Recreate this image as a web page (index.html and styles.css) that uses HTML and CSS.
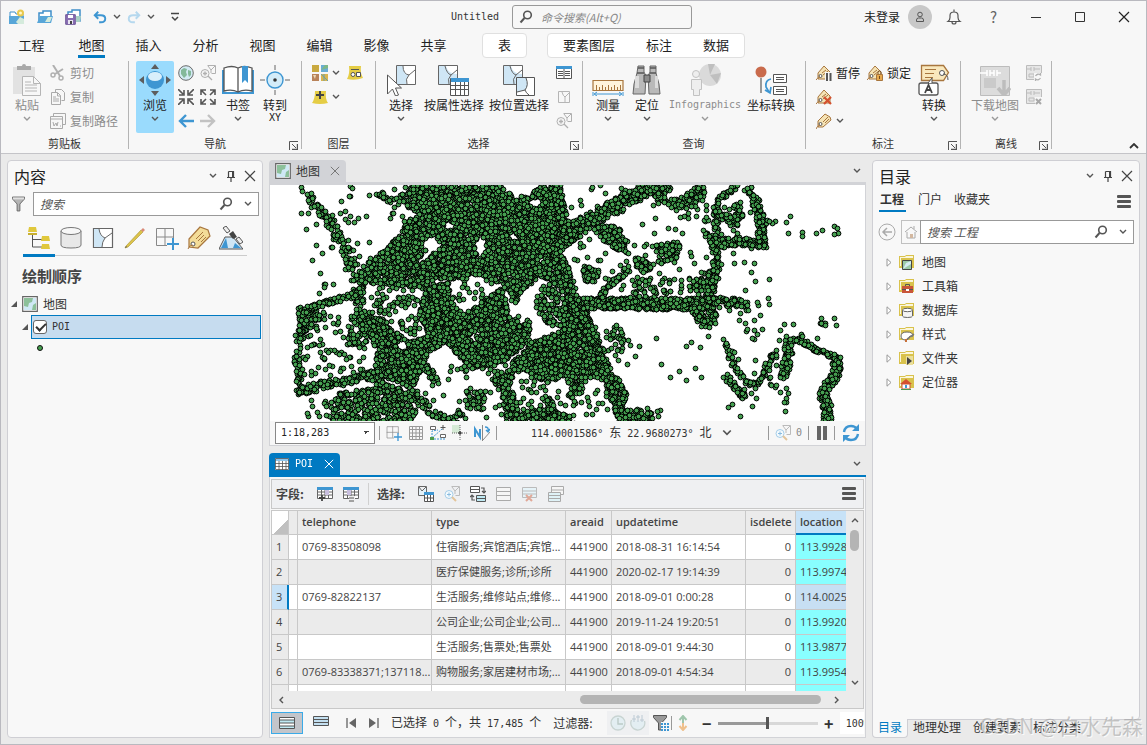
FILE: index.html
```html
<!DOCTYPE html>
<html lang="zh-CN">
<head>
  <meta charset="UTF-8">
  <meta name="viewport" content="width=device-width, initial-scale=1.0">
  <title>Untitled</title>
  <link rel="stylesheet" href="styles.css">
</head>
<body>

  <!-- Icon sprite -->
  <svg class="sprite" aria-hidden="true">
    <symbol id="chev" viewBox="0 0 8 6"><path d="M1 1l3 3 3-3" fill="none" stroke="currentColor" stroke-width="1.4"/></symbol>
    <symbol id="new" viewBox="0 0 16 16"><path d="M1 3h5l1 2h7v9H1z" fill="#fff" stroke="#3f8fc9"/><path d="M0 7h15v8H0z" fill="#58a6d8"/><path d="M7 13l4-5 4 2v5H9z" fill="#d5ebdc"/><circle cx="11.500" cy="4" r="3.500" fill="#e8c84c"/><circle cx="11.500" cy="4" r="1.500" fill="#fff6c8"/></symbol>
    <symbol id="open" viewBox="0 0 16 16"><path d="M2 13V4h4V2h8v7" fill="#fff" stroke="#3f8fc9" stroke-width="1.500"/><path d="M0 14l3-7h13l-2 7z" fill="#58a6d8"/><path d="M8 13l3-5 4 0-2 5z" fill="#d5ebdc"/></symbol>
    <symbol id="save" viewBox="0 0 16 16"><path d="M3 6V3h4V1h8v11h-4" fill="#fff" stroke="#3f8fc9" stroke-width="1.500"/><path d="M11 7h5l-1 6h-4z" fill="#a9d0c4"/><path d="M.7 5.700h9.600v9.600H.7z" fill="#8a6fb3" stroke="#6f5799"/><path d="M3 6h5v3H3z" fill="#fff"/><path d="M3 11h5v4H3z" fill="#e8e4f0"/><path d="M5 12h2v3H5z" fill="#444"/></symbol>
    <symbol id="undo" viewBox="0 0 16 16"><path d="M6 2L2 6l4 4M2 6h7q5 0 5 4t-5 4H7" fill="none" stroke="currentColor" stroke-width="2.200"/></symbol>
    <symbol id="redo" viewBox="0 0 16 16"><path d="M10 2l4 4-4 4M14 6H7Q2 6 2 10t5 4h2" fill="none" stroke="currentColor" stroke-width="2.200"/></symbol>
    <symbol id="custom" viewBox="0 0 10 10"><path d="M1 1.500h8M2 5l3 3 3-3" fill="none" stroke="#444" stroke-width="1.500"/></symbol>
    <symbol id="lens" viewBox="0 0 14 14"><circle cx="8.500" cy="5" r="3.800" fill="none" stroke="#555" stroke-width="1.600"/><path d="M5.500 8L1.500 12.500" stroke="#555" stroke-width="2"/></symbol>
    <symbol id="user" viewBox="0 0 12 14"><circle cx="6" cy="4.500" r="2.300" fill="none" stroke="#555"/><path d="M2.500 11.500V10q0-2 2-2h3q2 0 2 2v1.500z" fill="none" stroke="#555"/></symbol>
    <symbol id="bell" viewBox="0 0 14 16"><path d="M1 12.500h12q-2-1.500-2-4V6.500Q11 3 7 3T3 6.500v2q0 2.500-2 4zM7 3V.5M5 13q0 2 2 2t2-2" fill="none" stroke="#555" stroke-width="1.200"/></symbol>
    <symbol id="min" viewBox="0 0 12 12"><path d="M1 6.500h10" stroke="#333"/></symbol>
    <symbol id="max" viewBox="0 0 12 12"><path d="M1.500 1.500h9v9h-9z" fill="none" stroke="#333"/></symbol>
    <symbol id="close" viewBox="0 0 12 12"><path d="M1 1l10 10M11 1L1 11" stroke="currentColor" stroke-width="1.200"/></symbol>
    <symbol id="pin" viewBox="0 0 10 12"><path d="M2.500 1.500h5v5.500M2.500 1.500V7M1 7.500h8M5 8v4" fill="none" stroke="#444" stroke-width="1.200"/><path d="M6 1h2v6H6z" fill="#444"/></symbol>
    <symbol id="launch" viewBox="0 0 9 9"><path d="M.5 9V.5H9M3 3l4 4" fill="none" stroke="#555"/><path d="M8.500 3v5.500H3" fill="none" stroke="#555" stroke-width="1.400"/></symbol>

    <symbol id="paste" viewBox="0 0 32 32"><path d="M2 3h22v27H2z" fill="#e2e2e2"/><path d="M6 2h14v4H6z" fill="#a9a9a9"/><circle cx="13" cy="2" r="2" fill="#a9a9a9"/><path d="M11.500 12.500h11l7 7v12h-18z" fill="#f7f7f7" stroke="#b5b5b5"/><path d="M22.500 12.500v7h7M14 18h6M14 21h12M14 24h12M14 27h12" fill="none" stroke="#b5b5b5"/></symbol>
    <symbol id="cut" viewBox="0 0 16 16"><path d="M3 0l7 11M13 4L5 9" stroke="#b0b0b0" stroke-width="2"/><circle cx="3" cy="10" r="2" fill="none" stroke="#b0b0b0" stroke-width="1.500"/><circle cx="11" cy="13" r="2" fill="none" stroke="#b0b0b0" stroke-width="1.500"/></symbol>
    <symbol id="copy" viewBox="0 0 16 16"><path d="M5.500 3.500V.5h6l3 3v8h-3M1.500 3.500h6l3 3v9h-9z" fill="#f7f7f7" stroke="#aaa"/><path d="M7.500 4v3h3M3 8h3M3 10h6M3 12h6" fill="none" stroke="#aaa"/></symbol>
    <symbol id="copypath" viewBox="0 0 16 16"><path d="M3.500 3V.5h12v11H13M.5 3.500h12v12H.5z" fill="#f7f7f7" stroke="#aaa"/><path d="M1 6h11M3 9l1 4 2-3 1 3 1-4M10 13h1" fill="none" stroke="#aaa"/></symbol>
    <symbol id="explore" viewBox="0 0 32 32"><path d="M16 0l4 5h-8zM16 32l4-5h-8zM0 16l5-4v8zM32 16l-5-4v8z" fill="#5d5d5d"/><circle cx="16" cy="16" r="9" fill="#3e96d2"/><ellipse cx="16" cy="12.500" rx="7" ry="4.500" fill="#d9effb"/></symbol>
    <symbol id="globe" viewBox="0 0 16 16"><circle cx="8" cy="8" r="7.300" fill="#d3ebf4" stroke="#6b6b6b"/><path d="M3 5l3-2 3 1-1 3 1 3-3 3-3-4zM10 5l3 1 0 4-2 2-1-3z" fill="#83b99a"/></symbol>
    <symbol id="zoomsel" viewBox="0 0 16 16"><path d="M7.500 .5h8v8h-4M8 1l3 4 4-4M11 5v3" fill="none" stroke="#b0b0b0"/><circle cx="5" cy="8.500" r="4" fill="#f4f4f4" stroke="#b0b0b0"/><path d="M3 8.500h4M5 6.500v4M8 11l4 4" stroke="#b0b0b0" stroke-width="1.300"/></symbol>
    <symbol id="zoomin" viewBox="0 0 16 16"><path d="M0 0l5 5M6 1v5H1M16 0l-5 5M10 1v5h5M0 16l5-5M6 15v-5H1M16 16l-5-5M10 15v-5h5" fill="none" stroke="#555" stroke-width="1.600"/></symbol>
    <symbol id="zoomout" viewBox="0 0 16 16"><path d="M1 6V1h5M1 1l5 5M10 1h5v5M15 1l-5 5M1 10v5h5M1 15l5-5M10 15h5v-5M15 15l-5-5" fill="none" stroke="#555" stroke-width="1.600"/></symbol>
    <symbol id="back" viewBox="0 0 16 16"><path d="M8 2L2 8l6 6M2 8h14" fill="none" stroke="#3e96d2" stroke-width="2.400"/></symbol>
    <symbol id="fwd" viewBox="0 0 16 16"><path d="M8 2l6 6-6 6M14 8H0" fill="none" stroke="#c2c2c2" stroke-width="2.400"/></symbol>
    <symbol id="book" viewBox="0 0 32 32"><path d="M1 6v23h30V6" fill="#fff" stroke="#3e96d2" stroke-width="2"/><path d="M2 4q8-3 14 0 6-3 14 0v23q-8-2-14 1-6-3-14-1zM16 4v24" fill="#fff" stroke="#555" stroke-width="1.300"/><path d="M20 2h6v17l-3-3-3 3z" fill="#3e96d2"/></symbol>
    <symbol id="goxy" viewBox="0 0 32 32"><circle cx="16" cy="16" r="8" fill="#d3ecf9" stroke="#3e96d2" stroke-width="1.400"/><circle cx="16" cy="16" r="1.800" fill="#333"/><path d="M16 1v5M16 26v5M1 16h5M26 16h5" stroke="#666"/></symbol>
    <symbol id="basemap" viewBox="0 0 16 16"><path d="M0 0h7v7H0z" fill="#c9a93f"/><path d="M9 0h7v7H9z" fill="#6aaed6"/><path d="M9 5l4-5h3v3z" fill="#7eb887"/><path d="M0 9h7v7H0z" fill="#b9835a"/><path d="M1 10l3 0-1 4z" fill="#ecd9b5"/><path d="M9 9h7v7H9z" fill="#d8b552"/><path d="M9 9l7 7M12 9v7" stroke="#6aa0a8"/></symbol>
    <symbol id="adddata" viewBox="0 0 16 16"><path d="M3 2h11q-1 8 2 12-8 2-16 0Q3 10 3 2z" fill="#e5cd45"/><path d="M8 2v8M4 6h8" stroke="#444" stroke-width="2"/></symbol>
    <symbol id="addgfx" viewBox="0 0 16 16"><path d="M2 1h12q-1 7 2 12-8 3-16 1Q3 9 2 1z" fill="#e5cd45"/><circle cx="6" cy="9.500" r="2" fill="#fff" stroke="#555"/><path d="M9.500 7.500h4v4h-4zM4 4.500h8" fill="#fff" stroke="#555"/></symbol>
    <symbol id="select" viewBox="0 0 32 32"><path d="M11.500 1.500h19v19h-19z" fill="#fff" stroke="#666"/><path d="M12 2h6q0 8 6 9-4 4-2 9H12z" fill="#cfe6f5"/><path d="M18 2q0 8 6 9l6-5M24 11q-4 4-2 9" fill="none" stroke="#666"/><path d="M2.500 11v19l5-5 3 7 3-1-3-7h6z" fill="#fff" stroke="#555"/></symbol>
    <symbol id="selattr" viewBox="0 0 32 32"><path d="M.5 1.500h19v19H.5z" fill="#cfe6f5" stroke="#666"/><path d="M8 2h11v8q-9 0-11-8z" fill="#fff"/><path d="M7 2q2 8 6 9l6-5M13 11q-4 4-2 9" fill="none" stroke="#666"/><path d="M12.500 14.500h18v17h-18z" fill="#fff" stroke="#555"/><path d="M13 14h18v4H13z" fill="#3e96d2"/><path d="M13 21.500h18M13 25.500h18M17.500 18v13M22.500 18v13M26.500 18v13" stroke="#555"/></symbol>
    <symbol id="selloc" viewBox="0 0 32 32"><path d="M.5 1.500h19v19H.5z" fill="#cfe6f5" stroke="#666"/><path d="M8 2h11v8q-9 0-11-8z" fill="#fff"/><path d="M7 2q2 8 6 9l6-5M13 11q-4 4-2 9" fill="none" stroke="#666"/><path d="M13.500 13.500h18v18h-18z" fill="#fff" stroke="#555"/><path d="M14 14h9q3 7-1 12l-8 2z" fill="#cfe6f5"/><path d="M23 14q3 7-1 12l-8 2M22 26q1 3 4 5" fill="none" stroke="#555"/></symbol>
    <symbol id="attrtab" viewBox="0 0 16 14"><path d="M.5 .5h15v12H.5z" fill="#fff" stroke="#555"/><path d="M0 0h16v3H0z" fill="#3e96d2"/><path d="M2 5.500h5M2 7.500h5M2 9.500h5M9 5.500h5M9 7.500h5M9 9.500h5M8 3v10" stroke="#555"/></symbol>
    <symbol id="clearsel" viewBox="0 0 16 16"><path d="M2.500 2.500h11v11h-11zM6 3q1 4 3 5l4-4M9 8v5" fill="none" stroke="#b5b5b5"/></symbol>
    <symbol id="measure" viewBox="0 0 32 32"><path d="M1 16.500h30v10H1z" fill="#fff4dc" stroke="#a8763e" stroke-width="1.200"/><path d="M4.500 26v-5M7.500 26v-3M10.500 26v-5M13.500 26v-3M16.500 26v-5M19.500 26v-3M22.500 26v-5M25.500 26v-3M28.500 26v-5" stroke="#a8763e"/><path d="M1 28v4M31 28v4M3 30h26M5 28l-3 2 3 2M27 28l3 2-3 2" stroke="#3e96d2" fill="none"/></symbol>
    <symbol id="locate" viewBox="0 0 32 32"><path d="M7 2h6v6l2 4-1 18H2l1-10L6 9z" fill="#b9b9b9" stroke="#666"/><path d="M19 2h6v7l3 11 1 10H18l-1-18 2-4z" fill="#b9b9b9" stroke="#666"/><path d="M7 4h6M19 4h6M6 9h7M19 9h6" stroke="#555" stroke-width="1.600"/><path d="M4 12h4v12H4zM24 12h3v12h-3z" fill="#dcdcdc"/><path d="M13 11h6v7h-6z" fill="#8c8c8c" stroke="#444"/></symbol>
    <symbol id="info" viewBox="0 0 32 32"><circle cx="21" cy="11" r="11" fill="#dadada"/><path d="M21 11L19 0h7zM21 11l11-2-4 11z" fill="#bfbfbf"/><circle cx="7" cy="10" r="3.500" fill="#eee" stroke="#c2c2c2"/><path d="M2.500 15.500h10v10h-2v6h-6v-6h-2z" fill="#eee" stroke="#c2c2c2"/></symbol>
    <symbol id="coord" viewBox="0 0 32 32"><circle cx="6" cy="8" r="5.500" fill="#c96b4c"/><path d="M6 14v15" stroke="#666" stroke-width="1.300"/><path d="M16 15q-6 1-5 8l3 5M10 26l5 3 1-6" fill="none" stroke="#3e96d2" stroke-width="1.700"/><path d="M18.500 10.500h13v8h-13zM18.500 22.500h13v8h-13z" fill="#fff" stroke="#555"/><path d="M21 13.500h8M21 15.500h8M21 25.500h8M21 27.500h8" stroke="#555"/></symbol>
    <symbol id="tag" viewBox="0 0 16 16"><path d="M2 8L9 1l5 3 1 3-8 7-5 0z" fill="#f5e3b5" stroke="#a8763e"/><circle cx="4.500" cy="11" r="1.500" fill="#fff" stroke="#555"/><path d="M4 12q-3 1-4 4M7 9l5-5M9 10l4-4" fill="none" stroke="#a8763e"/></symbol>
    <symbol id="house" viewBox="0 0 16 16"><path d="M2 8l6-7 6 6v7H2z" fill="#f5e3b5" stroke="#a8763e"/><circle cx="4.500" cy="11" r="1.500" fill="#fff" stroke="#555"/><path d="M4 12q-3 1-4 3M6 8l4-3M7 10l5-4" fill="none" stroke="#a8763e"/></symbol>
    <symbol id="tagpause" viewBox="0 0 16 16"><use href="#house"/><path d="M9 7h7v9H9z" fill="#f7f7f7"/><path d="M11 8v8M14.500 8v8" stroke="#555" stroke-width="2"/></symbol>
    <symbol id="taglock" viewBox="0 0 16 16"><use href="#house"/><path d="M9.500 9.500h6v6h-6z" fill="#e8a94c" stroke="#a8763e"/><path d="M11 9V7.500q0-1.500 1.500-1.500T14 7.500V9M12.500 11v3" fill="none" stroke="#704a20"/></symbol>
    <symbol id="tagx" viewBox="0 0 16 16"><use href="#house"/><path d="M8 8l7 7M15 8l-7 7" stroke="#d4502e" stroke-width="2.200"/></symbol>
    <symbol id="convert" viewBox="0 0 32 32"><path d="M3.500 1.500h22l5 7-5 8h-22z" fill="#f9e8bd" stroke="#a8763e" stroke-width="1.300"/><path d="M7 5.500h11M7 9.500h9M7 13.500h8" stroke="#a8763e"/><circle cx="24" cy="9" r="2.500" fill="#fff" stroke="#555"/><path d="M25 10q5 0 5 6" fill="none" stroke="#555"/><rect x="1" y="19" width="19" height="12" rx="2" fill="#fff" stroke="#555" stroke-width="1.300"/><path d="M10 19l4-5v5" fill="#fff" stroke="#555"/><path d="M7 29l3.500-8 3.500 8M8.500 26h4" fill="none" stroke="#444" stroke-width="1.800"/></symbol>
    <symbol id="download" viewBox="0 0 32 32"><path d="M1.500 2.500h29v29h-29z" fill="#dcdcdc" stroke="#bcbcbc"/><path d="M1 9h7M8 6v6M11 6v6M11 9h4M15 6v6M18 6v6M18 9h4" stroke="#fff" stroke-width="1.500"/><path d="M5 14h12v10H5z" fill="#cacaca"/><path d="M25 16v13M19 24l6 7 6-7" fill="none" stroke="#bdbdbd" stroke-width="3.500"/></symbol>
    <symbol id="sync" viewBox="0 0 16 16"><path d="M.5 .5h15v14H.5z" fill="#e6e6e6" stroke="#bcbcbc"/><path d="M1 4h4M5 2v4M8 2v4M8 4h6M3 9h5v3H3z" stroke="#bcbcbc" fill="none"/><path d="M8 8h8v8H8z" fill="#f7f7f7"/><path d="M9.500 11q2-3 5-1v-2M14.500 13q-2 3-5 1v2" stroke="#b0b0b0" stroke-width="1.300" fill="none"/></symbol>
    <symbol id="unsync" viewBox="0 0 16 16"><path d="M.5 .5h15v14H.5z" fill="#e6e6e6" stroke="#bcbcbc"/><path d="M1 4h4M5 2v4M8 2v4M8 4h6M3 9h5v3H3z" stroke="#bcbcbc" fill="none"/><path d="M9 8h7v8H9z" fill="#f7f7f7"/><path d="M10 10l5 5M15 10l-5 5" stroke="#a8a8a8" stroke-width="2"/></symbol>
    <symbol id="up" viewBox="0 0 10 6"><path d="M1 5l4-4 4 4" fill="none" stroke="#333" stroke-width="1.800"/></symbol>

    <symbol id="filter" viewBox="0 0 14 16"><path d="M.5 .5h13v2L8.500 8v7.500h-3V8L.5 2.500z" fill="#b5b5b5" stroke="#666"/><path d="M1 1h12v2H1z" fill="#e0e0e0"/></symbol>
    <symbol id="order" viewBox="0 0 24 24"><path d="M5.500 9v12H15M5.500 13.500H15" fill="none" stroke="#555"/><path d="M2 1h7l1 5H1zM15 10h7l1 5h-9zM15 18h7l1 5h-9z" fill="#e0c83c"/><path d="M1 7h9v2H1z" fill="#c9b030"/></symbol>
    <symbol id="source" viewBox="0 0 24 24"><path d="M2 5v14q0 3 10 3t10-3V5" fill="#e8e8e8" stroke="#777"/><ellipse cx="12" cy="5" rx="10" ry="3.500" fill="#f7f7f7" stroke="#777"/></symbol>
    <symbol id="bysel" viewBox="0 0 24 24"><path d="M2.500 2.500h19v19h-19z" fill="#fff" stroke="#666" stroke-width="1.200"/><path d="M3 3h5q1 7 6 9-3 4-3 9H3z" fill="#cfe6f5"/><path d="M8 3q1 7 6 9l7-5M14 12q-3 4-3 9" fill="none" stroke="#666"/></symbol>
    <symbol id="pencil" viewBox="0 0 24 24"><path d="M3 20L18 4l2 2L5 21l-3 1z" fill="#dcc44a" stroke="#a89030" stroke-width=".6"/><path d="M18 4l2-2 2 2-2 2z" fill="#d98a78"/><path d="M2 22l1-2 1 1z" fill="#555"/></symbol>
    <symbol id="snap" viewBox="0 0 24 24"><path d="M1.500 2.500h17v17h-17zM10 2v17M1 11h18" fill="none" stroke="#888"/><path d="M12 13h12v11H12z" fill="#f8f8f8"/><path d="M18 12v12M12 18h12" stroke="#3e96d2" stroke-width="2"/></symbol>
    <symbol id="label" viewBox="0 0 24 24"><path d="M2 13L13 1l8 3 2 6-12 12-9-1z" fill="#f3dc98" stroke="#a8763e" stroke-width="1.200"/><circle cx="6" cy="18" r="2" fill="#fff" stroke="#555"/><path d="M6 19q-4 0-5 4M9 13l7-7M11 15l6-6M14 16l5-5" fill="none" stroke="#a8763e"/></symbol>
    <symbol id="sat" viewBox="0 0 24 24"><path d="M0 23L6 11h8l10 12z" fill="#cfe6f5" stroke="#555"/><path d="M2 22l5-10 2 10zM14 22l2-5 6 5z" fill="#3e96d2"/><path d="M4 2l3-2 4 5-3 2zM17 13l3-2 4 5-3 2z" fill="#eee" stroke="#555"/><path d="M10 8l4-3 4 6-4 2z" fill="#444"/></symbol>
    <symbol id="map" viewBox="0 0 16 16"><path d="M.7 .7h14.600v14.600H.7z" fill="#fff" stroke="#666" stroke-width="1.200"/><path d="M2 2h12v12H2z" fill="#cfe8f5"/><path d="M2 2h9l-1 4-3 1-1 4-4-1zM10 14l1-5 3-2v7z" fill="#8cc09a"/></symbol>
    <symbol id="open-tri" viewBox="0 0 6 6"><path d="M6 0v6H0z" fill="#555"/></symbol>
    <symbol id="shut-tri" viewBox="0 0 6 9"><path d="M1 .8l4 3.700-4 3.700z" fill="#fff" stroke="#999"/></symbol>

    <symbol id="grid" viewBox="0 0 16 16"><path d="M1.500 1.500h13v13h-13zM4.500 1v14M8 1v14M11.500 1v14M1 4.500h14M1 8h14M1 11.500h14" fill="none" stroke="#999"/></symbol>
    <symbol id="editsnap" viewBox="0 0 16 16"><path d="M2 13V6l6-1M2 13l10-9M4 14h11" fill="none" stroke="#3e96d2" stroke-dasharray="2 1"/><path d="M.5 1.500h5v3h-5zM10.500 9.500h5v3h-5z" fill="#fff" stroke="#666"/><path d="M13 0v5M10.500 2.500h5" stroke="#555"/><path d="M0 12h4v3H0z" fill="#4a9a4a"/></symbol>
    <symbol id="cross" viewBox="0 0 16 16"><path d="M0 0h8v8H0z" fill="#d5ead5"/><path d="M8 0v16M0 8h16" stroke="#666" stroke-dasharray="1 1"/><path d="M6 8h4M8 6v4" stroke="#222"/></symbol>
    <symbol id="north" viewBox="0 0 16 16"><path d="M1 12V4l5 8V4" fill="none" stroke="#3e96d2" stroke-width="2"/><path d="M8.500 0v16M9 15l7-8" stroke="#888" fill="none"/><path d="M11 2q4 0 3 4M12 5l2 2 2-3" fill="none" stroke="#3e96d2" stroke-width="1.400"/></symbol>
    <symbol id="zoomc" viewBox="0 0 16 16"><path d="M7.500 .5h8v9h-4M8 1l3 4 4-4M11 5v3" fill="none" stroke="#bbb"/><circle cx="5" cy="8.500" r="4" fill="#f4fafd" stroke="#a5cde8"/><path d="M3 8.500h4M5 6.500v4" stroke="#8abce0"/><path d="M8 11l4 4" stroke="#e3c49a" stroke-width="2"/></symbol>
    <symbol id="pause" viewBox="0 0 12 14"><path d="M3 0v14M9 0v14" stroke="#666" stroke-width="4"/></symbol>
    <symbol id="refresh" viewBox="0 0 18 18"><path d="M2 8q1-6 7-6 4 0 6 3M16 10q-1 6-7 6-4 0-6-3" fill="none" stroke="#3e96d2" stroke-width="2.400"/><path d="M17 0v7h-7zM1 18v-7h7z" fill="#3e96d2"/></symbol>
    <symbol id="table" viewBox="0 0 14 12"><path d="M0 0h14v12H0z" fill="#fff"/><path d="M0 0h14v3H0z" fill="#8ec4ea"/><path d="M.5 .5h13v11H.5zM0 5.500h14M0 8.500h14M4 3v9M7.500 3v9M11 3v9" fill="none" stroke="#555" stroke-width=".8"/></symbol>
    <symbol id="fadd" viewBox="0 0 16 16"><path d="M.5 1.500h15v11H.5zM1 6h14M1 9h14M4.500 4v8M8 4v8M11.500 4v8" fill="#fff" stroke="#666"/><path d="M0 1h16v3H0z" fill="#3e96d2"/><path d="M8 4h4v5H8z" fill="#c9bfe0"/><path d="M5 9v6M2 12h6" stroke="#444" stroke-width="1.800"/></symbol>
    <symbol id="fcalc" viewBox="0 0 16 16"><path d="M.5 1.500h15v11H.5zM1 6h14M1 9h14M4.500 4v8M8 4v8M11.500 4v8" fill="#fff" stroke="#666"/><path d="M0 1h16v3H0z" fill="#3e96d2"/><path d="M4 4h4v5H4z" fill="#c9bfe0"/><path d="M6 10h6v6H6z" fill="#efefef"/><path d="M6 12h5M6 15h5" stroke="#555"/></symbol>
    <symbol id="tsel" viewBox="0 0 16 16"><path d="M.5 .5h8v9h-8zM1 1l3 4 4-4" fill="#e3f1f9" stroke="#666"/><path d="M6.500 6.500h9v9h-9zM7 12h9M9.500 9v6M12.500 9v6" fill="#fff" stroke="#555"/><path d="M6 6h10v3H6z" fill="#3e96d2"/></symbol>
    <symbol id="switch" viewBox="0 0 16 16"><path d="M.5 .5h9v6h-9zM.5 3.500h9" fill="#fff" stroke="#555"/><path d="M6.500 9.500h9v6h-9zM6.500 12.500h9" fill="#bfe9f3" stroke="#555"/><path d="M11 2h3v5M12 5l2 2 2-2M5 14H2V9M0 11l2-2 2 2" fill="none" stroke="#555" stroke-width="1.200"/></symbol>
    <symbol id="rows" viewBox="0 0 16 16"><path d="M.5 1.500h14v13H.5zM0 5.500h15M0 9.500h15" fill="#f6f6f6" stroke="#aaa"/></symbol>
    <symbol id="rowsx" viewBox="0 0 16 16"><path d="M.5 1.500h14v10H.5zM0 5h15M0 8h15" fill="#e6f3f8" stroke="#bbb"/><path d="M4 9l6 6M10 9l-6 6" stroke="#e0a898" stroke-width="2"/></symbol>
    <symbol id="rowscopy" viewBox="0 0 16 16"><path d="M3.500 .5h12v8h-12zM3 4h12" fill="#f6f6f6" stroke="#aaa"/><path d="M.5 6.500h12v9H.5zM0 9.500h12M0 12.500h12" fill="#dff2f7" stroke="#aaa"/></symbol>
    <symbol id="menu" viewBox="0 0 14 13"><path d="M1 1.500h12M1 6.500h12M1 11.500h12" stroke="#555" stroke-width="2.800" stroke-linecap="round"/></symbol>
    <symbol id="allrows" viewBox="0 0 16 14"><path d="M.5 1.500h15v11H.5z" fill="#fff" stroke="#555"/><path d="M1 4h14v3H1zM1 10h14v2H1z" fill="#bfe9f3"/><path d="M1 4h14M1 7h14M1 10h14" stroke="#555"/></symbol>
    <symbol id="selrows" viewBox="0 0 16 14"><path d="M.5 .5h15v9H.5zM1 3.500h14M1 6.500h14" fill="#c3dff0" stroke="#555"/></symbol>
    <symbol id="first" viewBox="0 0 10 10"><path d="M1 0v10" stroke="#555" stroke-width="1.200"/><path d="M10 0v10L3 5z" fill="#666"/></symbol>
    <symbol id="last" viewBox="0 0 10 10"><path d="M9 0v10" stroke="#555" stroke-width="1.200"/><path d="M0 0v10l7-5z" fill="#666"/></symbol>
    <symbol id="clock" viewBox="0 0 16 16"><circle cx="8" cy="8" r="7" fill="#e3eef2" stroke="#c8d4d2" stroke-width="1.300"/><path d="M8 3v6h5" fill="none" stroke="#bccbc8" stroke-width="1.400"/></symbol>
    <symbol id="range" viewBox="0 0 16 16"><path d="M14.500 6a7 7 0 1 1-13-1" fill="#e3eef2" stroke="#c8d4d2" stroke-width="1.300"/><path d="M4 0v7M8 0v7M12 0v7M2 4h4M6 2h4M10 5h4" stroke="#bccad4"/></symbol>
    <symbol id="tfilter" viewBox="0 0 18 16"><path d="M.5 .5h13v2L8.500 8v7h-3V8L.5 2.500z" fill="#999" stroke="#555"/><path d="M8 7h8v9H8z" fill="#f7f7f7"/><path d="M8 8h2v2H8zM11 8h2v2h-2zM14 8h2v2h-2zM8 11h2v2H8zM11 11h2v2h-2zM14 11h2v2h-2zM8 14h2v2H8zM11 14h2v2h-2zM14 14h2v2h-2z" fill="#3e96d2"/></symbol>
    <symbol id="updown" viewBox="0 0 10 16"><path d="M5 1v7M1.500 5L5 1l3.500 4" fill="none" stroke="#9fc6ac" stroke-width="2"/><path d="M5 8v7M1.500 11L5 15l3.500-4" fill="none" stroke="#efc08c" stroke-width="2"/></symbol>
    <symbol id="backc" viewBox="0 0 18 18"><circle cx="9" cy="9" r="8" fill="none" stroke="#aaa"/><path d="M9 5L5 9l4 4M5 9h9" fill="none" stroke="#aaa" stroke-width="1.500"/></symbol>
    <symbol id="home" viewBox="0 0 14 14"><path d="M1 7l6-5 6 5M3 7v6h8V7M10 4V1" fill="none" stroke="#aaa"/><path d="M6 9h3v4H6z" fill="#d3b8a0"/></symbol>
    <symbol id="folder" viewBox="0 0 16 16"><path d="M0 2h6l1-1h8v13H0z" fill="#d9c24c"/><path d="M1 3h5l1-1h7v2H2v8H1z" fill="#fbf6dc"/></symbol>
    <symbol id="f-map" viewBox="0 0 16 16"><use href="#folder"/><path d="M3.500 6.500h9v9h-9z" fill="#9ccaa8" stroke="#444"/><path d="M4 15l3-6 5-2v3z" fill="#d5ecf2"/></symbol>
    <symbol id="f-box" viewBox="0 0 16 16"><use href="#folder"/><path d="M3 8h11v7H3z" fill="#c8553a"/><path d="M6.500 8V6.500h4V8M3 11.500h11" fill="none" stroke="#555"/><path d="M7 11h3v2H7z" fill="#fff"/></symbol>
    <symbol id="f-db" viewBox="0 0 16 16"><use href="#folder"/><path d="M3.500 8v6q0 1.500 5 1.500t5-1.500V8" fill="#f4f4f4" stroke="#666"/><ellipse cx="8.500" cy="8" rx="5" ry="1.700" fill="#fff" stroke="#666"/></symbol>
    <symbol id="f-style" viewBox="0 0 16 16"><use href="#folder"/><path d="M2 10q0-4 6-4t6 4q-1 1-3 0-1 4-4 4-5 0-5-4z" fill="#fff" stroke="#666"/><path d="M8 13l7-5" stroke="#777" stroke-width="1.500"/><path d="M6 13h2v3H6z" fill="#c8703a"/></symbol>
    <symbol id="f-dir" viewBox="0 0 16 16"><use href="#folder"/><path d="M7 6h7v9H7z" fill="#eadf9c"/><path d="M8 7l5 4-5 4z" fill="#444"/></symbol>
    <symbol id="f-loc" viewBox="0 0 16 16"><use href="#folder"/><path d="M3 10h8v5H3z" fill="#fff" stroke="#c8553a"/><path d="M1 10l6-5 6 5z" fill="#d4502e"/><path d="M2 15.500h10" stroke="#4a9a4a"/><path d="M6 11h2v3H6z" fill="#3e96d2"/></symbol>
  </svg>

  <div class="app">
    <header class="top">
      <!-- Title bar -->
      <div class="titlebar">
        <div class="quick">
          <button aria-label="新建"><svg class="s16"><use href="#new"/></svg></button>
          <button aria-label="打开"><svg class="s16"><use href="#open"/></svg></button>
          <button aria-label="保存"><svg class="s16"><use href="#save"/></svg></button>
          <button class="undo" aria-label="撤销"><svg class="s14"><use href="#undo"/></svg><svg class="chev"><use href="#chev"/></svg></button>
          <button class="redo" aria-label="恢复"><svg class="s14"><use href="#redo"/></svg><svg class="chev"><use href="#chev"/></svg></button>
          <button aria-label="自定义"><svg class="s10"><use href="#custom"/></svg></button>
        </div>
        <div class="doc">
          <span class="mono">Untitled</span>
          <label class="command"><svg class="s14"><use href="#lens"/></svg><input type="text" placeholder="命令搜索(Alt+Q)" aria-label="命令搜索"></label>
        </div>
        <div class="account">
          <a href="#">未登录</a>
          <span class="avatar"><svg class="person"><use href="#user"/></svg></span>
          <button aria-label="通知"><svg class="s16"><use href="#bell"/></svg></button>
          <button class="help" aria-label="帮助">?</button>
          <button aria-label="最小化"><svg class="s12"><use href="#min"/></svg></button>
          <button aria-label="最大化"><svg class="s12"><use href="#max"/></svg></button>
          <button aria-label="关闭"><svg class="s12"><use href="#close"/></svg></button>
        </div>
      </div>

      <!-- Ribbon tabs -->
      <nav class="tabs">
        <a class="file" href="#">工程</a>
        <a class="active" href="#"><span>地图</span></a>
        <a href="#">插入</a>
        <a href="#">分析</a>
        <a href="#">视图</a>
        <a href="#">编辑</a>
        <a href="#">影像</a>
        <a href="#">共享</a>
        <div class="context"><a href="#">表</a></div>
        <div class="context"><a href="#">要素图层</a><a href="#">标注</a><a href="#">数据</a></div>
      </nav>

      <!-- Ribbon -->
      <div class="ribbon">
        <section class="group clipboard">
          <div class="tools">
            <button class="big off"><svg><use href="#paste"/></svg>粘贴<svg class="chev"><use href="#chev"/></svg></button>
            <div class="small">
              <button class="off"><svg><use href="#cut"/></svg>剪切</button>
              <button class="off"><svg><use href="#copy"/></svg>复制</button>
              <button class="off"><svg><use href="#copypath"/></svg>复制路径</button>
            </div>
          </div>
          <footer>剪贴板</footer>
        </section>
        <section class="group nav">
          <div class="tools">
            <button class="big on"><svg><use href="#explore"/></svg>浏览<svg class="chev"><use href="#chev"/></svg></button>
            <div class="small two">
              <button aria-label="全图"><svg><use href="#globe"/></svg></button>
              <button aria-label="缩放至所选"><svg><use href="#zoomsel"/></svg></button>
              <button aria-label="固定放大"><svg><use href="#zoomin"/></svg></button>
              <button aria-label="固定缩小"><svg><use href="#zoomout"/></svg></button>
              <button aria-label="上一视图"><svg><use href="#back"/></svg></button>
              <button aria-label="下一视图"><svg><use href="#fwd"/></svg></button>
            </div>
            <button class="big"><svg><use href="#book"/></svg>书签<svg class="chev"><use href="#chev"/></svg></button>
            <button class="big"><svg><use href="#goxy"/></svg>转到<span class="mono xy">XY</span></button>
          </div>
          <footer>导航<svg class="launch"><use href="#launch"/></svg></footer>
        </section>
        <section class="group layer">
          <div class="tools">
            <div class="small">
              <button aria-label="底图"><svg><use href="#basemap"/></svg><svg class="chev"><use href="#chev"/></svg></button>
              <button aria-label="添加数据"><svg><use href="#adddata"/></svg><svg class="chev"><use href="#chev"/></svg></button>
            </div>
            <div class="small">
              <button aria-label="添加图形"><svg><use href="#addgfx"/></svg></button>
            </div>
          </div>
          <footer>图层</footer>
        </section>
        <section class="group selection">
          <div class="tools">
            <button class="big"><svg><use href="#select"/></svg>选择<svg class="chev"><use href="#chev"/></svg></button>
            <button class="big wide"><svg><use href="#selattr"/></svg>按属性选择</button>
            <button class="big wide"><svg><use href="#selloc"/></svg>按位置选择</button>
            <div class="small">
              <button aria-label="属性"><svg><use href="#attrtab"/></svg></button>
              <button aria-label="清除"><svg><use href="#clearsel"/></svg></button>
              <button aria-label="缩放至"><svg><use href="#zoomsel"/></svg></button>
            </div>
          </div>
          <footer>选择<svg class="launch"><use href="#launch"/></svg></footer>
        </section>
        <section class="group inquiry">
          <div class="tools">
            <button class="big"><svg><use href="#measure"/></svg>测量<svg class="chev"><use href="#chev"/></svg></button>
            <button class="big"><svg><use href="#locate"/></svg>定位<svg class="chev"><use href="#chev"/></svg></button>
            <button class="big off info"><svg><use href="#info"/></svg><span class="mono">Infographics</span><svg class="chev"><use href="#chev"/></svg></button>
            <button class="big mid"><svg><use href="#coord"/></svg>坐标转换</button>
          </div>
          <footer>查询</footer>
        </section>
        <section class="group labeling">
          <div class="tools">
            <div class="small">
              <button><svg><use href="#tagpause"/></svg>暂停</button>
              <button aria-label="查看未放置"><svg><use href="#tagx"/></svg></button>
              <button aria-label="更多"><svg><use href="#tag"/></svg><svg class="chev"><use href="#chev"/></svg></button>
            </div>
            <div class="small">
              <button><svg><use href="#taglock"/></svg>锁定</button>
            </div>
            <button class="big"><svg><use href="#convert"/></svg>转换<svg class="chev"><use href="#chev"/></svg></button>
          </div>
          <footer>标注<svg class="launch"><use href="#launch"/></svg></footer>
        </section>
        <section class="group offline">
          <div class="tools">
            <button class="big mid off"><svg><use href="#download"/></svg>下载地图<svg class="chev"><use href="#chev"/></svg></button>
            <div class="small">
              <button aria-label="同步"><svg><use href="#sync"/></svg></button>
              <button aria-label="移除"><svg><use href="#unsync"/></svg></button>
            </div>
          </div>
          <footer>离线<svg class="launch"><use href="#launch"/></svg></footer>
        </section>
        <button class="collapse" aria-label="折叠功能区"><svg><use href="#up"/></svg></button>
      </div>
    </header>

    <main>
      <!-- Contents pane -->
      <aside class="pane contents">
        <div class="pane-head">
          <h2>内容</h2>
          <button aria-label="选项"><svg class="chev"><use href="#chev"/></svg></button>
          <button aria-label="固定"><svg class="s12"><use href="#pin"/></svg></button>
          <button aria-label="关闭"><svg class="s12"><use href="#close"/></svg></button>
        </div>
        <div class="search-row">
          <button aria-label="过滤"><svg class="funnel"><use href="#filter"/></svg></button>
          <label class="search"><input type="text" placeholder="搜索" aria-label="搜索"><svg class="s14"><use href="#lens"/></svg><svg class="chev"><use href="#chev"/></svg></label>
        </div>
        <div class="views">
          <button class="active" aria-label="按绘制顺序"><svg><use href="#order"/></svg></button>
          <button aria-label="按数据源"><svg><use href="#source"/></svg></button>
          <button aria-label="按选择"><svg><use href="#bysel"/></svg></button>
          <button aria-label="按编辑"><svg><use href="#pencil"/></svg></button>
          <button aria-label="按捕捉"><svg><use href="#snap"/></svg></button>
          <button aria-label="按标注"><svg><use href="#label"/></svg></button>
          <button aria-label="按影像"><svg><use href="#sat"/></svg></button>
        </div>
        <h3>绘制顺序</h3>
        <div class="toc">
          <div class="toc-map"><svg class="tri"><use href="#open-tri"/></svg><svg class="s16"><use href="#map"/></svg>地图</div>
          <div class="toc-layer">
            <svg class="tri"><use href="#open-tri"/></svg>
            <label><input type="checkbox" checked><span class="mono">POI</span></label>
          </div>
          <div class="legend"></div>
        </div>
      </aside>

      <div class="center">
        <!-- Map view -->
        <section class="view">
          <div class="view-tabs">
            <div class="view-tab"><svg class="s16"><use href="#map"/></svg>地图<button aria-label="关闭"><svg class="s10"><use href="#close"/></svg></button></div>
            <button aria-label="视图列表"><svg class="chev"><use href="#chev"/></svg></button>
          </div>
          <div class="map"><canvas id="poi-canvas"></canvas></div>
          <div class="status">
            <select class="mono" aria-label="比例尺"><option>1:18,283</option></select>
            <i class="bar"></i>
            <button aria-label="捕捉"><svg class="s16"><use href="#snap"/></svg></button>
            <button aria-label="格网"><svg class="s16"><use href="#grid"/></svg></button>
            <button aria-label="编辑捕捉"><svg class="s16"><use href="#editsnap"/></svg></button>
            <button aria-label="十字"><svg class="s16"><use href="#cross"/></svg></button>
            <button aria-label="指北"><svg class="s16"><use href="#north"/></svg></button>
            <i class="bar"></i>
            <span class="coords"><span class="mono">114.0001586° </span>东<span class="mono"> 22.9680273° </span>北</span>
            <button class="units" aria-label="单位"><svg class="chev"><use href="#chev"/></svg></button>
            <i class="bar push"></i>
            <button class="count" disabled><svg class="s16"><use href="#zoomc"/></svg><span class="mono">0</span></button>
            <i class="bar"></i>
            <button aria-label="暂停"><svg class="pause"><use href="#pause"/></svg></button>
            <i class="bar"></i>
            <button aria-label="刷新"><svg class="s18"><use href="#refresh"/></svg></button>
          </div>
        </section>

        <!-- Attribute table -->
        <section class="view attr">
          <div class="view-tabs">
            <div class="view-tab"><svg class="tbl"><use href="#table"/></svg><span class="mono">POI</span><button aria-label="关闭"><svg class="s10"><use href="#close"/></svg></button></div>
            <button aria-label="视图列表"><svg class="chev"><use href="#chev"/></svg></button>
          </div>
          <div class="table-pane">
            <div class="table-tools">
              <b>字段:</b>
              <button aria-label="添加字段"><svg class="s16"><use href="#fadd"/></svg></button>
              <button aria-label="计算字段"><svg class="s16"><use href="#fcalc"/></svg></button>
              <i class="bar"></i>
              <b>选择:</b>
              <button aria-label="按属性选择"><svg class="s16"><use href="#tsel"/></svg></button>
              <button aria-label="缩放至"><svg class="s16"><use href="#zoomc"/></svg></button>
              <button aria-label="切换"><svg class="s16"><use href="#switch"/></svg></button>
              <button aria-label="清除"><svg class="s16"><use href="#rows"/></svg></button>
              <button aria-label="删除"><svg class="s16"><use href="#rowsx"/></svg></button>
              <button aria-label="复制"><svg class="s16"><use href="#rowscopy"/></svg></button>
              <button class="menu" aria-label="菜单"><svg><use href="#menu"/></svg></button>
            </div>
            <div class="grid-box">
              <div class="grid-scroll">
                <table>
                  <colgroup><col class="c-num"><col class="c-gap"><col class="c-text"><col class="c-text"><col class="c-area"><col class="c-text"><col class="c-del"><col class="c-loc"></colgroup>
                  <thead>
                    <tr><th class="corner"></th><th></th><th>telephone</th><th>type</th><th>areaid</th><th>updatetime</th><th>isdelete</th><th class="sel">location</th></tr>
                  </thead>
                  <tbody>
                    <tr><th>1</th><td></td><td>0769-83508098</td><td>住宿服务;宾馆酒店;宾馆...</td><td>441900</td><td>2018-08-31 16:14:54</td><td>0</td><td>113.992865</td></tr>
                    <tr><th>2</th><td></td><td></td><td>医疗保健服务;诊所;诊所</td><td>441900</td><td>2020-02-17 19:14:39</td><td>0</td><td>113.997472</td></tr>
                    <tr class="current"><th>3</th><td></td><td>0769-82822137</td><td>生活服务;维修站点;维修...</td><td>441900</td><td>2018-09-01 0:00:28</td><td>0</td><td>114.0025</td></tr>
                    <tr><th>4</th><td></td><td></td><td>公司企业;公司企业;公司...</td><td>441900</td><td>2019-11-24 19:20:51</td><td>0</td><td>113.992063</td></tr>
                    <tr><th>5</th><td></td><td></td><td>生活服务;售票处;售票处</td><td>441900</td><td>2018-09-01 9:44:30</td><td>0</td><td>113.987722</td></tr>
                    <tr><th>6</th><td></td><td>0769-83338371;137118...</td><td>购物服务;家居建材市场;...</td><td>441900</td><td>2018-09-01 4:54:34</td><td>0</td><td>113.995461</td></tr>
                    <tr><th></th><td></td><td></td><td>餐饮服务;中餐厅;综合...</td><td></td><td></td><td></td><td></td></tr>
                  </tbody>
                </table>
              </div>
              <div class="vscroll"><svg class="chev flip"><use href="#chev"/></svg><i></i><svg class="chev"><use href="#chev"/></svg></div>
              <div class="hscroll"><svg class="chev left"><use href="#chev"/></svg><i></i><svg class="chev right"><use href="#chev"/></svg></div>
            </div>
            <div class="table-foot">
              <button class="on" aria-label="全部记录"><svg class="s16"><use href="#allrows"/></svg></button>
              <button class="picked" aria-label="所选记录"><svg class="s16"><use href="#selrows"/></svg></button>
              <button class="step" aria-label="第一条"><svg class="s10"><use href="#first"/></svg></button>
              <button class="step" aria-label="最后一条"><svg class="s10"><use href="#last"/></svg></button>
              <span class="tally">已选择<span class="mono"> 0 </span>个，共<span class="mono"> 17,485 </span>个</span>
              <span>过滤器:</span>
              <span class="filters"><svg class="s16"><use href="#clock"/></svg><svg class="s16"><use href="#range"/></svg></span>
              <button aria-label="范围过滤"><svg class="tf"><use href="#tfilter"/></svg></button>
              <i class="bar"></i>
              <button aria-label="排序"><svg class="ud"><use href="#updown"/></svg></button>
              <button class="pm" aria-label="缩小">−</button>
              <input type="range" min="0" max="100" value="50" aria-label="缩放">
              <button class="pm" aria-label="放大">+</button>
              <input type="text" class="mono pct" value="100%" aria-label="缩放比例">
            </div>
          </div>
        </section>
      </div>

      <!-- Catalog pane -->
      <aside class="catalog-col">
        <div class="pane catalog">
          <div class="pane-head">
            <h2>目录</h2>
            <button aria-label="选项"><svg class="chev"><use href="#chev"/></svg></button>
            <button aria-label="固定"><svg class="s12"><use href="#pin"/></svg></button>
            <button aria-label="关闭"><svg class="s12"><use href="#close"/></svg></button>
          </div>
          <nav class="cat-tabs">
            <a class="active" href="#">工程</a><a href="#">门户</a><a href="#">收藏夹</a>
            <button class="menu" aria-label="菜单"><svg><use href="#menu"/></svg></button>
          </nav>
          <div class="cat-search">
            <button aria-label="后退"><svg class="s18"><use href="#backc"/></svg></button>
            <button class="home" aria-label="主页"><svg class="s14"><use href="#home"/></svg></button>
            <label class="search"><input type="text" placeholder="搜索 工程" aria-label="搜索工程"><svg class="s14"><use href="#lens"/></svg><svg class="chev"><use href="#chev"/></svg></label>
          </div>
          <ul class="tree">
            <li><svg class="shut"><use href="#shut-tri"/></svg><svg class="s16"><use href="#f-map"/></svg>地图</li>
            <li><svg class="shut"><use href="#shut-tri"/></svg><svg class="s16"><use href="#f-box"/></svg>工具箱</li>
            <li><svg class="shut"><use href="#shut-tri"/></svg><svg class="s16"><use href="#f-db"/></svg>数据库</li>
            <li><svg class="shut"><use href="#shut-tri"/></svg><svg class="s16"><use href="#f-style"/></svg>样式</li>
            <li><svg class="shut"><use href="#shut-tri"/></svg><svg class="s16"><use href="#f-dir"/></svg>文件夹</li>
            <li><svg class="shut"><use href="#shut-tri"/></svg><svg class="s16"><use href="#f-loc"/></svg>定位器</li>
          </ul>
        </div>
        <nav class="dock-tabs">
          <a class="active" href="#">目录</a><a href="#">地理处理</a><a href="#">创建要素</a><a href="#">标注分类</a>
        </nav>
      </aside>
    </main>
    <div class="watermark">CSDN @白水先森</div>
  </div>

  <script src="map.js"></script>
</body>
</html>
```
FILE: styles.css
```css
* {
  box-sizing: border-box;
}

body {
  margin: 0;
  background: #eaeaea;
  color: #333;
  font: 12px/16px "Noto Sans CJK SC", sans-serif;
}

button {
  display: flex;
  align-items: center;
  justify-content: center;
  padding: 0;
  border: 0;
  background: none;
  color: inherit;
  font: inherit;
}

a {
  color: inherit;
  text-decoration: none;
}

svg {
  display: block;
  flex: none;
}

h2, h3, ul {
  margin: 0;
  padding: 0;
}

input {
  min-width: 0;
  font: inherit;
  color: inherit;
}

.sprite {
  position: absolute;
  width: 0;
  height: 0;
}

.mono {
  font-family: "DejaVu Sans Mono", monospace;
  font-size: 10px;
  white-space: pre;
}

.s10 { width: 10px; height: 10px; }
.s12 { width: 12px; height: 12px; }
.s14 { width: 14px; height: 14px; }
.s16 { width: 16px; height: 16px; }
.s18 { width: 18px; height: 18px; }
.chev { width: 8px; height: 6px; color: #555; }

.bar {
  width: 1px;
  height: 14px;
  background: #999;
}

.app {
  display: flex;
  flex-direction: column;
  height: 100vh;
  border: 1px solid #b9b9bf;
  overflow: hidden;
}

.top {
  background: #f7f7f7;
  border-bottom: 1px solid #c4c4c8;
}

/* title bar */
.titlebar {
  display: flex;
  align-items: center;
  height: 32px;
}

.quick {
  flex: 1;
  display: flex;
  align-items: center;
  gap: 12px;
  padding-left: 8px;
}

.quick .undo, .quick .redo {
  gap: 6px;
}

.quick .undo { color: #3e96d2; }

.quick .redo {
  margin: 0 3px 0 -6px;
  color: #b5d8ee;
}

.doc {
  display: flex;
  align-items: center;
  gap: 13px;
  margin-right: 12px;
}

.command {
  display: flex;
  align-items: center;
  gap: 6px;
  width: 180px;
  height: 24px;
  padding: 0 6px;
  border: 1px solid #999;
  border-radius: 3px;
}

.command input {
  flex: 1;
  border: 0;
  background: none;
  font-size: 11px;
}

input::placeholder {
  color: #555;
  font-style: italic;
}

.command input::placeholder {
  color: #888;
}

.account {
  flex: 1;
  display: flex;
  align-items: center;
  justify-content: flex-end;
  color: #222;
}

.account button {
  width: 44px;
}

.account .avatar + button {
  width: 38px;
  margin-left: 3px;
}

.account .help {
  width: 41px;
  color: #666;
  font-size: 15px;
}

.avatar {
  display: flex;
  align-items: center;
  justify-content: center;
  width: 24px;
  height: 24px;
  margin-left: 8px;
  border-radius: 50%;
  background: #c8c8c8;
}

.person {
  width: 12px;
  height: 14px;
}

/* ribbon tabs */
.tabs {
  display: flex;
  height: 25px;
  padding-left: 2px;
  color: #222;
  font-size: 13px;
  line-height: 24px;
}

.tabs > a {
  width: 57px;
  text-align: center;
}

.tabs .file {
  margin-right: 3px;
}

.tabs .active span {
  display: inline-block;
  height: 25px;
  border-bottom: 3px solid #007ac2;
}

.context {
  display: flex;
  gap: 31px;
  margin-left: 20px;
  padding: 0 15px;
  border: 1px solid #e0e0e0;
  border-radius: 4px;
  background: #fff;
  line-height: 22px;
}

/* ribbon */
.ribbon {
  display: flex;
  height: 95px;
  padding-top: 3px;
}

.group {
  display: flex;
  flex-direction: column;
  height: 88px;
  padding-left: 7px;
  border-right: 1px solid #b4b4b4;
}

.clipboard { width: 128px; }
.nav { width: 173px; }
.layer { width: 74px; }
.selection { width: 207px; }
.inquiry { width: 223px; }
.labeling { width: 155px; }
.offline { width: 91px; }

.selection, .inquiry {
  padding-left: 6px;
}

.tools {
  flex: none;
  display: flex;
  gap: 1px;
  height: 74px;
}

.selection .tools {
  gap: 3px;
}

.group footer {
  position: relative;
  padding-right: 7px;
  font-size: 11px;
  line-height: 16px;
  text-align: center;
}

.launch {
  position: absolute;
  right: 3px;
  bottom: 1px;
  width: 9px;
  height: 9px;
}

.big {
  flex-direction: column;
  justify-content: flex-start;
  width: 38px;
  height: 72px;
  padding-top: 3px;
  color: #222;
  white-space: nowrap;
}

.nav .big:not(.on) {
  width: 36px;
}

.big > svg:first-child {
  width: 32px;
  height: 32px;
  margin-bottom: 1px;
}

.big .chev {
  margin-top: 3px;
}

.big .mono {
  line-height: 16px;
}

.big .xy {
  line-height: 10px;
}

.big.on {
  border-radius: 2px;
  background: #9adbfd;
}

.big.wide { width: 62px; }
.big.mid { width: 54px; }
.big.info { width: 76px; }

.big.off, .small .off {
  color: #8c8c8c;
}

.big.off .chev {
  color: #999;
}

.small {
  display: grid;
  grid-auto-rows: 24px;
  align-content: start;
}

.small.two {
  grid-template-columns: 22px 22px;
}

.small button {
  justify-content: flex-start;
  gap: 4px;
  padding: 0 3px;
  color: #222;
  white-space: nowrap;
}

.small svg:not(.chev) {
  width: 16px;
  height: 16px;
}

.collapse {
  align-self: flex-end;
  margin: 0 7px 4px auto;
}

.collapse svg {
  width: 10px;
  height: 6px;
}

/* work area */
main {
  flex: 1;
  display: grid;
  grid-template-columns: 256px 1fr 268px;
  gap: 6px;
  min-height: 0;
  padding: 6px;
}

.pane {
  border: 1px solid #cfcfd4;
  border-radius: 4px;
  background: #f8f8f8;
}

.pane-head {
  display: flex;
  align-items: center;
  gap: 7px;
  height: 29px;
  padding: 0 6px 0 6px;
  color: #444;
}

.pane-head h2 {
  flex: 1;
  color: #222;
  font-size: 16px;
  font-weight: 400;
}

.pane-head .chev {
  margin-right: 1px;
}

.search-row {
  display: flex;
  align-items: center;
  gap: 8px;
  padding: 2px 3px 0 4px;
}

.funnel {
  width: 13px;
  height: 16px;
}

.search {
  flex: 1;
  display: flex;
  align-items: center;
  gap: 11px;
  height: 24px;
  min-width: 0;
  padding: 0 6px;
  border: 1px solid #999;
  background: #fff;
}

.search input {
  flex: 1;
  padding: 0;
  border: 0;
}

.views {
  display: flex;
  margin: 5px 15px 0;
  border-bottom: 1px solid #ccc;
}

.views button {
  width: 32px;
  height: 34px;
}

.views .active {
  margin-bottom: -2px;
  height: 36px;
  border-bottom: 3px solid #007ac2;
}

.views svg {
  width: 24px;
  height: 24px;
}

.contents h3 {
  margin: 10px 14px 6px;
  color: #444;
  font-size: 15px;
  line-height: 20px;
}

.toc-map {
  display: flex;
  align-items: center;
  gap: 5px;
  height: 23px;
  padding-left: 3px;
}

.tri {
  width: 6px;
  height: 6px;
}

.toc-layer {
  display: flex;
  align-items: center;
  gap: 3px;
  padding: 0 1px 0 14px;
}

.toc-layer label {
  flex: 1;
  display: flex;
  align-items: center;
  gap: 5px;
  height: 24px;
  padding-left: 1px;
  border: 1px solid #007ac2;
  background: #c6dcef;
}

.toc-layer input {
  appearance: none;
  width: 14px;
  height: 14px;
  margin: 0;
  border: 1px solid #666;
  border-radius: 3px;
  background: #fff;
}

.toc-layer input:checked::after {
  content: "";
  display: block;
  width: 4px;
  height: 8px;
  margin-left: 4px;
  border: solid #333;
  border-width: 0 2px 2px 0;
  transform: rotate(45deg);
}

.legend {
  width: 6px;
  height: 6px;
  margin: 6px 0 0 29px;
  border: 1px solid #111;
  border-radius: 50%;
  background: #46a04f;
}

/* views */
.center {
  display: flex;
  flex-direction: column;
  gap: 7px;
  min-width: 0;
  min-height: 0;
}

.view {
  flex: 1;
  display: flex;
  flex-direction: column;
  min-height: 0;
}

.view-tabs {
  display: flex;
  justify-content: space-between;
  height: 25px;
  padding-right: 5px;
  border-bottom: 3px solid #d2d3d7;
}

.view-tab {
  display: flex;
  align-items: center;
  gap: 5px;
  padding: 0 6px;
  border-radius: 4px 4px 0 0;
  background: #d2d3d7;
}

.view-tab button {
  margin-left: 5px;
  color: #777;
}

.attr .view-tabs {
  height: 24px;
  border-color: #007ac2;
  border-width: 2px;
}

.attr .view-tab {
  gap: 6px;
  background: #007ac2;
  color: #fff;
}

.attr .view-tab button {
  color: #fff;
}

.tbl {
  width: 14px;
  height: 12px;
}

.map {
  flex: 1;
  min-height: 0;
  border: solid #d2d3d7;
  border-width: 0 1px;
  background: #fff;
  overflow: hidden;
}

.map canvas {
  display: block;
}

.status {
  display: flex;
  align-items: center;
  gap: 6px;
  height: 25px;
  padding: 0 5px;
  border: solid #d2d3d7;
  border-width: 0 1px 1px;
  background: #f7f7f7;
}

.status select {
  appearance: none;
  width: 100px;
  height: 22px;
  margin-right: -2px;
  padding: 0 5px;
  border: 1px solid #888;
  border-radius: 0;
  background:
    linear-gradient(45deg, transparent 50%, #444 50%) no-repeat right 8px center / 3px 3px,
    linear-gradient(-45deg, transparent 50%, #444 50%) no-repeat right 5px center / 3px 3px,
    #fff;
  color: #222;
}

.coords {
  margin-left: 28px;
  white-space: pre;
}

.units {
  margin-left: 4px;
}

.units .chev {
  width: 10px;
  height: 8px;
}

.push {
  margin-left: auto;
}

.count {
  gap: 5px;
  color: #888;
}

.pause {
  width: 12px;
  height: 14px;
}

.status .bar:nth-last-child(-n+5) {
  margin-right: 1px;
}

/* attribute table */
.table-pane {
  flex: 1;
  display: flex;
  flex-direction: column;
  min-height: 0;
  padding: 2px 1px 0;
  border: solid #d2d3d7;
  border-width: 0 1px 1px;
  background: #f7f7f7;
}

.table-tools {
  display: flex;
  align-items: center;
  gap: 10px;
  height: 30px;
  padding: 0 7px 0 4px;
  border: 1px solid #c8c8c8;
  background: #eff0f2;
}

.table-tools b {
  margin-right: 3px;
  color: #444;
}

.table-tools .bar {
  height: 22px;
  margin: 0 -2px 0 -1px;
  background: #d0d0d0;
}

.menu {
  margin-left: auto;
}

.menu svg {
  width: 14px;
  height: 13px;
}

.grid-box {
  flex: 1;
  display: grid;
  grid-template: 1fr 17px / 1fr 17px;
  min-height: 0;
  margin-top: 1px;
  border: 1px solid #c8c8c8;
  background: #ebebeb;
}

.grid-scroll {
  min-width: 0;
  min-height: 0;
  overflow: hidden;
}

table {
  width: 0;
  table-layout: fixed;
  border-collapse: separate;
  border-spacing: 0;
  color: #444;
  font: 11px/16px "Open Sans", "Noto Sans CJK SC", sans-serif;
}

.c-num { width: 17px; }
.c-gap { width: 9px; }
.c-text { width: 134px; }
.c-area { width: 46px; }
.c-del { width: 50px; }
.c-loc { width: 80px; }

th, td {
  height: 25px;
  padding: 0 4px;
  overflow: hidden;
  border: solid #c8c8c8;
  border-width: 0 1px 1px 0;
  background: #fff;
  text-align: left;
  white-space: nowrap;
}

th {
  background: #ebebeb;
  font-weight: 600;
}

thead th {
  height: 24px;
}

tbody th {
  padding: 0 0 0 4px;
  font-weight: 400;
}

tbody tr:nth-child(even) td {
  background: #ebebeb;
}

td:nth-child(7) {
  text-align: right;
}

td:last-child {
  background: #8ff;
}

tbody tr:nth-child(even) td:last-child {
  background: #8ff;
}

.corner {
  background: linear-gradient(135deg, #fff 62%, #c0c0c0 62%);
}

th.sel {
  border-bottom: 2px solid #007ac2;
  background: #c7e2f7;
}

.current th {
  border-right: 2px solid #007ac2;
  background: #c7e2f7;
}

tbody .current td:last-child {
  background: #c7dff3;
}

.vscroll {
  display: flex;
  flex-direction: column;
  align-items: center;
  padding: 6px 0 5px;
}

.vscroll i {
  width: 9px;
  height: 21px;
  margin: 7px 0 auto;
  border-radius: 5px;
  background: #b4b4b4;
}

.hscroll {
  grid-column: 1 / -1;
  display: flex;
  align-items: center;
  padding: 0 22px 0 5px;
}

.hscroll i {
  width: 241px;
  height: 9px;
  margin: 0 12px 0 auto;
  border-radius: 5px;
  background: #b4b4b4;
}

.flip { transform: rotate(180deg); }
.left { transform: rotate(90deg); }
.right { transform: rotate(-90deg); }

.table-foot {
  display: flex;
  align-items: center;
  height: 28px;
  overflow: hidden;
  white-space: nowrap;
}

.table-foot > * {
  flex: none;
}

.table-foot .on {
  width: 32px;
  height: 22px;
  border: 1px solid #3aaae8;
  background: #c3c5ca;
}

.picked {
  width: 36px;
}

.step {
  width: 23px;
}

.tally {
  margin: 0 12px 0 6px;
}

.filters {
  display: flex;
  align-items: center;
  gap: 4px;
  height: 24px;
  margin: 0 4px 0 14px;
  padding: 0 3px;
  background: #eff0f2;
}

.tf { width: 18px; height: 16px; }
.ud { width: 10px; height: 16px; margin: 0 8px 0 6px; }

.pm {
  width: 22px;
  font-size: 16px;
  font-weight: 700;
}

.table-foot input[type="range"] {
  appearance: none;
  width: 100px;
  height: 12px;
  margin: 0;
  background: linear-gradient(90deg, #999 50%, #d8d8d8 50%) no-repeat center / 100% 3px;
}

.table-foot input::-webkit-slider-thumb {
  appearance: none;
  width: 3px;
  height: 12px;
  background: #555;
}

.pct {
  width: 50px;
  height: 22px;
  padding: 0 6px;
  border: 0;
  background: #fff;
}

/* catalog */
.catalog-col {
  display: flex;
  flex-direction: column;
  min-height: 0;
}

.catalog {
  flex: 1;
  border-bottom-left-radius: 0;
}

.cat-tabs {
  display: flex;
  align-items: center;
  gap: 12px;
  padding: 1px 8px 0 6px;
}

.cat-tabs a {
  height: 21px;
}

.cat-tabs .active {
  border-bottom: 2px solid #007ac2;
  font-weight: 700;
  padding: 0 2px 0 1px;
}

.cat-search {
  display: flex;
  align-items: center;
  margin: 8px 5px 6px 5px;
}

.home {
  width: 19px;
  height: 24px;
  margin-left: 5px;
  border: 1px solid #c0c0c0;
  border-right: 0;
}

.tree {
  list-style: none;
}

.tree li {
  display: flex;
  align-items: center;
  gap: 7px;
  height: 24px;
  padding-left: 13px;
}

.shut {
  width: 6px;
  height: 9px;
}

.dock-tabs {
  display: flex;
  height: 19px;
  margin-top: -1px;
}

.dock-tabs a {
  margin-right: 2px;
  padding: 0 5px;
}

.dock-tabs .active {
  margin-right: 0;
  border: solid #cfcfd4;
  border-width: 0 1px 1px;
  border-radius: 0 0 4px 4px;
  background: #f8f8f8;
  color: #007ac2;
}

.watermark {
  position: absolute;
  right: 4px;
  bottom: 8px;
  color: rgba(150, 150, 150, 0.5);
  font-size: 21px;
  line-height: 24px;
  text-shadow: 1px 1px 0 rgba(255, 255, 255, 0.8);
}
```
FILE: map.js
```js
// POI layer: points scattered over built-up areas and along roads
const areas = [
  { n: 3900, pts: [[140,0],[228,0],[245,12],[261,10],[268,0],[285,0],[293,27],[299,57],[290,67],[298,83],[300,112],[275,92],[265,95],[251,105],[245,117],[238,103],[231,97],[211,93],[198,97],[185,95],[165,92],[155,103],[125,100],[95,97],[91,106],[88,87],[108,67],[128,50],[138,35],[148,27],[132,20]] },
  { n: 2300, pts: [[155,103],[178,97],[181,120],[195,130],[211,117],[231,103],[238,127],[248,137],[261,133],[258,157],[231,177],[218,183],[198,183],[185,167],[175,157],[158,167],[151,187],[141,203],[128,197],[108,190],[118,170],[98,147],[88,127],[111,133],[138,157],[158,150],[148,127]] },
  { n: 520, pts: [[262,157],[298,143],[302,188],[275,197],[241,177]] },
  { n: 420, pts: [[293,120],[318,127],[331,170],[341,197],[318,190],[298,180]] },
  { n: 330, pts: [[68,207],[90,205],[112,200],[135,205],[152,215],[140,236],[60,236],[58,222]] },
  { n: 130, pts: [[275,97],[300,110],[302,150],[270,135],[262,120]] },
  { n: 90, pts: [[298,115],[318,125],[318,145],[298,140]] },
  { n: 90, pts: [[315,35],[350,42],[356,68],[340,62]] },
  { n: 90, pts: [[428,85],[446,85],[446,140],[432,138]] },
  { n: 60, pts: [[105,112],[145,110],[165,145],[155,160],[110,130]] },
  { n: 60, pts: [[385,60],[410,55],[408,72],[388,78]] },
  { n: 40, pts: [[365,72],[380,75],[378,88],[366,84]] },
  { n: 60, pts: [[28,120],[50,118],[50,150],[28,155]] },
  { n: 60, pts: [[80,130],[95,130],[98,165],[76,160]] },
  { n: 40, pts: [[312,80],[330,85],[325,97],[313,97]] },
  { n: 28, pts: [[336,142],[355,142],[352,168],[336,165]] },
  { n: 50, pts: [[195,205],[215,205],[215,225],[195,222]] },
  { n: 60, pts: [[298,180],[318,190],[312,205],[298,215]] }
];

const holes = [
  [161, 59, 6, 7], [210, 61, 4, 8], [178, 40, 3, 3], [265, 17, 5, 3], [155, 71, 2, 3],
  [205, 150, 3, 6], [132, 160, 4, 4], [245, 125, 4, 7], [243, 52, 3, 2], [203, 96, 6, 5]
];

// w is the spread across the line, n the number of points on it
const roads = [
  { n: 70, w: 9, pts: [[32,2],[42,15],[58,34],[66,48],[78,70]] },
  { n: 150, w: 11, pts: [[74,62],[86,90],[88,118],[102,150],[118,172]] },
  { n: 110, w: 5, pts: [[92,108],[68,114],[45,120],[32,128],[30,150]] },
  { n: 45, w: 6, pts: [[28,150],[27,176],[29,205]] },
  { n: 190, w: 8, pts: [[27,206],[50,200],[80,195],[105,188],[112,168]] },
  { n: 90, w: 10, pts: [[102,185],[118,205],[140,212],[152,208]] },
  { n: 430, w: 13, pts: [[292,55],[318,35],[345,20],[370,6],[396,0]] },
  { n: 620, w: 11, pts: [[306,118],[350,118],[400,119],[448,117]] },
  { n: 40, w: 9, pts: [[448,116],[476,119]] },
  { n: 320, w: 9, pts: [[302,115],[318,140],[330,170],[340,198],[352,234]] },
  { n: 150, w: 8, pts: [[286,0],[292,30],[298,55]] },
  { n: 120, w: 9, pts: [[290,72],[298,95],[304,118],[312,135]] },
  { n: 60, w: 5, pts: [[331,112],[340,98],[358,85]] },
  { n: 90, w: 11, pts: [[404,20],[418,16],[432,3]] },
  { n: 60, w: 9, pts: [[382,3],[392,14],[390,4]] },
  { n: 60, w: 5, pts: [[466,0],[446,16],[445,50]] },
  { n: 60, w: 8, pts: [[447,27],[462,37],[470,34],[466,22]] },
  { n: 130, w: 9, pts: [[436,50],[450,58],[470,56],[492,60]] },
  { n: 120, w: 8, pts: [[476,2],[486,18],[490,36],[492,60]] },
  { n: 12, w: 6, pts: [[490,37],[506,36]] },
  { n: 60, w: 7, pts: [[444,60],[446,85],[440,108]] },
  { n: 45, w: 6, pts: [[330,48],[352,64]] },
  { n: 38, w: 7, pts: [[424,126],[436,140]] },
  { n: 50, w: 4, pts: [[454,152],[460,174],[470,190],[478,198],[492,198]] },
  { n: 45, w: 5, pts: [[454,190],[464,200],[474,212]] },
  { n: 35, w: 5, pts: [[490,196],[496,182],[504,165]] },
  { n: 75, w: 4, pts: [[514,157],[528,154],[545,164],[566,172]] },
  { n: 60, w: 8, pts: [[516,158],[518,170],[512,195]] },
  { n: 80, w: 8, pts: [[566,172],[566,190],[556,202]] },
  { n: 70, w: 9, pts: [[552,206],[556,220],[558,236]] },
  { n: 150, w: 12, pts: [[228,190],[238,210],[242,236]] },
  { n: 70, w: 8, pts: [[238,190],[258,175],[262,158]] },
  { n: 70, w: 12, pts: [[350,230],[368,230],[386,228]] },
  { n: 110, w: 10, pts: [[245,232],[270,228],[300,234]] },
  { n: 60, w: 8, pts: [[278,212],[282,236]] },
  { n: 50, w: 6, pts: [[340,190],[355,208],[352,215]] },
  { n: 40, w: 7, pts: [[152,212],[160,230],[185,234],[190,226]] },
  { n: 28, w: 6, pts: [[140,6],[126,18],[108,8]] },
  { n: 30, w: 6, pts: [[155,180],[166,196]] }
];

// loose points: [x, y, width, height, count]
const scatter = [
  [30, 0, 60, 45, 26], [90, 0, 45, 40, 13], [28, 60, 45, 50, 11], [28, 125, 50, 60, 36],
  [68, 55, 32, 30, 12], [30, 160, 75, 35, 32], [35, 215, 30, 18, 14], [98, 92, 45, 40, 42],
  [155, 95, 95, 60, 130], [240, 180, 60, 55, 45], [160, 180, 80, 55, 34], [300, 0, 60, 25, 10],
  [360, 15, 80, 35, 22], [300, 50, 60, 50, 26], [345, 55, 80, 55, 42], [360, 92, 78, 20, 60],
  [335, 135, 52, 50, 14], [298, 170, 40, 60, 38], [385, 150, 60, 80, 10], [430, 15, 60, 65, 22],
  [455, 65, 48, 60, 9], [515, 30, 55, 22, 11], [455, 115, 40, 30, 12], [448, 135, 55, 55, 15],
  [508, 132, 62, 28, 14], [455, 200, 60, 34, 10], [495, 165, 25, 60, 14], [545, 130, 16, 10, 7]
];

let seed = 20;
function rnd() {
  seed = (seed * 16807) % 2147483647;
  return seed / 2147483647;
}

function inside(x, y, pts) {
  let hit = false;
  for (let i = 0, j = pts.length - 1; i < pts.length; j = i++) {
    const [xi, yi] = pts[i];
    const [xj, yj] = pts[j];
    if ((yi > y) !== (yj > y) && x < (xj - xi) * (y - yi) / (yj - yi) + xi) hit = !hit;
  }
  return hit;
}

function inHole(x, y) {
  return holes.some(([hx, hy, rx, ry]) => ((x - hx) / (rx + 2)) ** 2 + ((y - hy) / (ry + 2)) ** 2 < 1);
}

const points = [];

areas.forEach(({ n, pts }) => {
  const xs = pts.map(p => p[0]);
  const ys = pts.map(p => p[1]);
  const x0 = Math.min(...xs), x1 = Math.max(...xs);
  const y0 = Math.min(...ys), y1 = Math.max(...ys);
  let left = n;
  while (left > 0) {
    const x = x0 + rnd() * (x1 - x0);
    const y = y0 + rnd() * (y1 - y0);
    if (inside(x, y, pts)) {
      left--;
      if (!inHole(x, y)) points.push([x, y]);
    }
  }
});

roads.forEach(({ n, w, pts }) => {
  const segs = pts.slice(1).map((p, i) => Math.hypot(p[0] - pts[i][0], p[1] - pts[i][1]));
  const total = segs.reduce((a, b) => a + b, 0);
  for (let k = 0; k < n; k++) {
    let d = rnd() * total;
    let i = 0;
    while (i < segs.length - 1 && d > segs[i]) d -= segs[i++];
    const t = d / segs[i];
    const x = pts[i][0] + (pts[i + 1][0] - pts[i][0]) * t + (rnd() - 0.5) * w;
    const y = pts[i][1] + (pts[i + 1][1] - pts[i][1]) * t + (rnd() - 0.5) * w;
    points.push([x, y]);
  }
});

scatter.forEach(([x, y, w, h, n]) => {
  for (let k = 0; k < n; k++) points.push([x + rnd() * w, y + rnd() * h]);
});

function draw() {
  const canvas = document.getElementById("poi-canvas");
  const box = canvas.parentElement;
  canvas.width = box.clientWidth;
  canvas.height = box.clientHeight;
  const ctx = canvas.getContext("2d");
  ctx.fillStyle = "#45a050";
  ctx.strokeStyle = "#000";
  ctx.lineWidth = 1;
  points.forEach(([x, y]) => {
    ctx.beginPath();
    ctx.arc(Math.round(x) + 0.5, Math.round(y) + 0.5, 2.4, 0, Math.PI * 2);
    ctx.fill();
    ctx.stroke();
  });
}

draw();
window.addEventListener("resize", draw);
```
